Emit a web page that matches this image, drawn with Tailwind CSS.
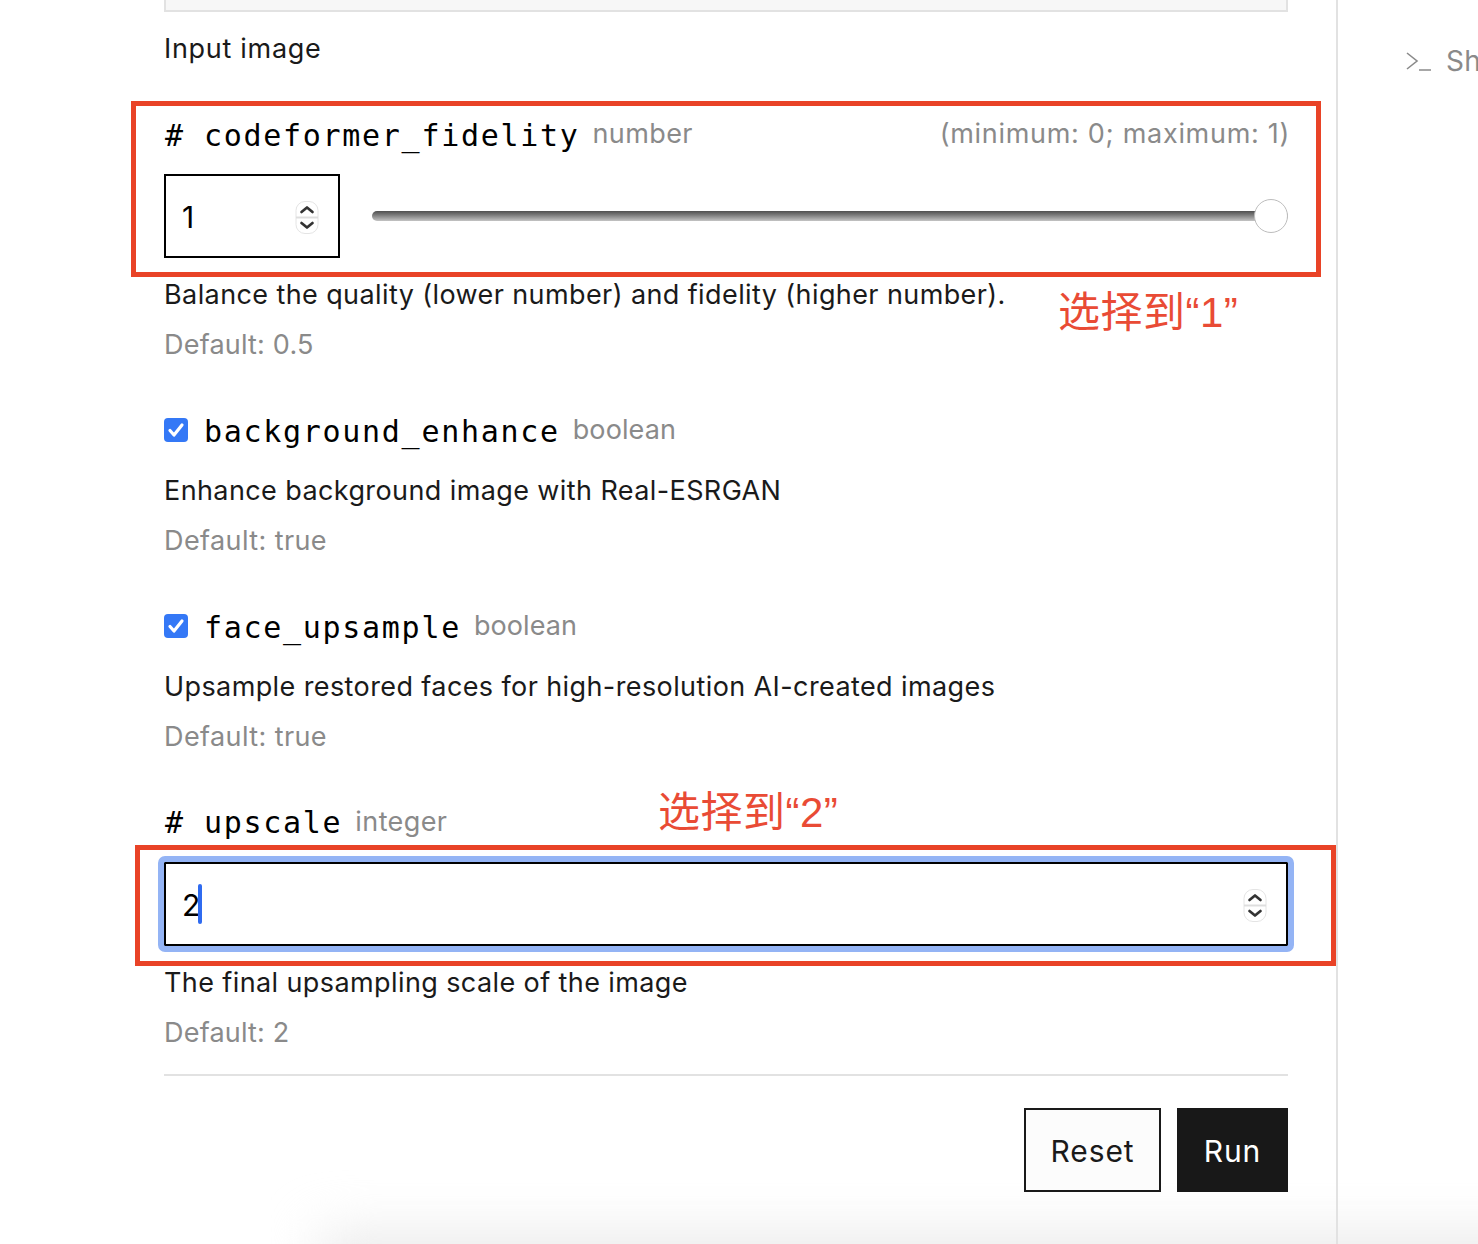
<!DOCTYPE html>
<html lang="en">
<head>
  <meta charset="UTF-8">
  <title>codeformer</title>
  <script src="https://cdn.jsdelivr.net/npm/@tailwindcss/browser@4"></script>
</head>
<body class="bg-white">
<div class="relative flex w-[1478px] h-[1244px] overflow-hidden font-['Inter','Noto_Sans',sans-serif] text-[27px] tracking-[0.4px] text-[#1a1a1a]">

  <!-- bottom fade, sits behind the form -->
  <div class="absolute left-[320px] right-[-100px] top-[1232px] h-[90px] bg-[#ebebeb] blur-[26px] pointer-events-none"></div>

  <!-- form column -->
  <main class="relative z-10 w-[1338px] h-full shrink-0 border-r-2 border-[#e2e2e2] pl-[164px] pr-[48px]">
    <div class="h-[12px] bg-[#f7f7f7] border-2 border-t-0 border-[#e2e2e2]"></div>
    <p class="mt-[18px] h-[36px] leading-[38px] tracking-[0.7px]">Input image</p>

    <!-- codeformer_fidelity -->
    <div class="mt-[48px] flex items-center justify-between h-[40px] pl-[1px] -mr-[2px]">
      <div class="flex items-center">
        <span class="font-['DejaVu_Sans_Mono',monospace] text-[30px] tracking-[1.7px] text-black w-[39px] pt-[2px]">#</span>
        <span class="font-['DejaVu_Sans_Mono',monospace] text-[30px] tracking-[1.7px] text-black pt-[2px]">codeformer_fidelity</span>
        <span class="ml-[13px] text-[#8a8a8a]">number</span>
      </div>
      <span class="text-[#8a8a8a] tracking-[0.7px]">(minimum: 0; maximum: 1)</span>
    </div>
    <div class="mt-[20px] flex items-center h-[84px]">
      <div class="w-[176px] h-[84px] border-2 border-black flex items-center justify-between pl-[16px] pr-[19px] text-black text-[30px]">
        <span class="pt-[2px]">1</span>
        <svg class="mt-[3px]" width="24" height="33" viewBox="0 0 24 33" fill="none"><rect x="1" y="0.500" width="22" height="32" rx="9" fill="#fff" stroke="#e4e4e4"/><path d="M1 16.500h22" stroke="#dedede" stroke-width="2"/><path d="M6.500 11l5.500-4.500 5.500 4.500M6.500 22l5.500 4.500 5.500-4.500" stroke="#333" stroke-width="2.700" stroke-linecap="round" stroke-linejoin="round"/></svg>
      </div>
      <div class="relative ml-[32px] flex-1 h-[34px] flex items-center">
        <div class="w-full h-[10px] rounded-full bg-gradient-to-b from-[#4f4f4f] to-[#c4c4c4]"></div>
        <div class="absolute right-0 top-0 w-[34px] h-[34px] rounded-full bg-white border border-[#bdbdbd]"></div>
      </div>
    </div>
    <p class="mt-[18px] h-[36px] leading-[38px]">Balance the quality (lower number) and fidelity (higher number).</p>
    <p class="mt-[14px] h-[36px] leading-[38px] tracking-[0.2px] text-[#8a8a8a]">Default: 0.5</p>

    <!-- background_enhance -->
    <div class="mt-[48px] flex items-center h-[40px]">
      <svg class="w-[24px] h-[24px] mr-[16px]" viewBox="0 0 24 24"><rect width="24" height="24" rx="4" fill="#3478f6"/><path d="M6 12.500l4 4.500 8-10" fill="none" stroke="#fff" stroke-width="3.200" stroke-linecap="round" stroke-linejoin="round"/></svg>
      <span class="font-['DejaVu_Sans_Mono',monospace] text-[30px] tracking-[1.7px] text-black pt-[2px]">background_enhance</span>
      <span class="ml-[13px] text-[#8a8a8a] tracking-[0.1px]">boolean</span>
    </div>
    <p class="mt-[22px] h-[36px] leading-[38px]">Enhance background image with Real-ESRGAN</p>
    <p class="mt-[14px] h-[36px] leading-[38px] text-[#8a8a8a]">Default: true</p>

    <!-- face_upsample -->
    <div class="mt-[48px] flex items-center h-[40px]">
      <svg class="w-[24px] h-[24px] mr-[16px]" viewBox="0 0 24 24"><rect width="24" height="24" rx="4" fill="#3478f6"/><path d="M6 12.500l4 4.500 8-10" fill="none" stroke="#fff" stroke-width="3.200" stroke-linecap="round" stroke-linejoin="round"/></svg>
      <span class="font-['DejaVu_Sans_Mono',monospace] text-[30px] tracking-[1.7px] text-black pt-[2px]">face_upsample</span>
      <span class="ml-[13px] text-[#8a8a8a] tracking-[0.1px]">boolean</span>
    </div>
    <p class="mt-[22px] h-[36px] leading-[38px]">Upsample restored faces for high-resolution AI-created images</p>
    <p class="mt-[14px] h-[36px] leading-[38px] text-[#8a8a8a]">Default: true</p>

    <!-- upscale -->
    <div class="mt-[48px] flex items-center h-[40px] pl-[1px]">
      <span class="font-['DejaVu_Sans_Mono',monospace] text-[30px] tracking-[1.7px] text-black w-[39px]">#</span>
      <span class="font-['DejaVu_Sans_Mono',monospace] text-[30px] tracking-[1.7px] text-black">upscale</span>
      <span class="ml-[13px] text-[#8a8a8a]">integer</span>
    </div>
    <div class="mt-[20px] h-[84px] border-2 border-black rounded-[1px] outline-[6px] outline-[#94b4f5] flex items-center justify-between pl-[16px] pr-[19px] text-black text-[30px]">
      <span class="flex items-center"><span class="pt-[2px]">2</span><span class="w-[4px] h-[40px] rounded-full bg-[#2f6bf0] -ml-[3px]"></span></span>
      <svg class="mt-[3px]" width="24" height="33" viewBox="0 0 24 33" fill="none"><rect x="1" y="0.500" width="22" height="32" rx="9" fill="#fff" stroke="#e4e4e4"/><path d="M1 16.500h22" stroke="#dedede" stroke-width="2"/><path d="M6.500 11l5.500-4.500 5.500 4.500M6.500 22l5.500 4.500 5.500-4.500" stroke="#333" stroke-width="2.700" stroke-linecap="round" stroke-linejoin="round"/></svg>
    </div>
    <p class="mt-[18px] h-[36px] leading-[38px]">The final upsampling scale of the image</p>
    <p class="mt-[14px] h-[36px] leading-[38px] tracking-[0.2px] text-[#8a8a8a]">Default: 2</p>

    <div class="mt-[24px] border-t-2 border-[#e2e2e2]"></div>
    <div class="mt-[32px] flex justify-end gap-[16px] text-[30px] tracking-[0.9px]">
      <button class="w-[137px] h-[84px] pt-[2px] border-2 border-[#1a1a1a] bg-[#fcfcfc]">Reset</button>
      <button class="w-[111px] h-[84px] pt-[2px] bg-[#181818] text-white">Run</button>
    </div>
  </main>

  <!-- right rail -->
  <aside class="relative z-10 pl-[68px] pt-[42px] flex items-center h-[80px] gap-[14px] text-[28px] text-[#8a8a8a] shrink-0">
    <svg width="26" height="20" viewBox="0 0 26 20" fill="none" stroke="#8a8a8a" stroke-width="1.600"><path d="M1 2l10 8-10 8M13 19h12"/></svg>
    <span>Sh</span>
  </aside>

  <!-- red annotations over the screenshot -->
  <div class="absolute z-20 left-[131px] top-[101px] w-[1190px] h-[176px] border-[5px] border-[#e94327]"></div>
  <div class="absolute z-20 left-[135px] top-[845px] w-[1201px] h-[121px] border-[5px] border-[#e94327]"></div>
  <div class="absolute z-20 left-[1058px] top-[281px] font-['Liberation_Sans','Noto_Sans_CJK_SC',sans-serif] text-[42px] tracking-[0.5px] text-[#e94b35] whitespace-nowrap">选择到“1”</div>
  <div class="absolute z-20 left-[658px] top-[781px] font-['Liberation_Sans','Noto_Sans_CJK_SC',sans-serif] text-[42px] tracking-[0.5px] text-[#e94b35] whitespace-nowrap">选择到“2”</div>
</div>
</body>
</html>
